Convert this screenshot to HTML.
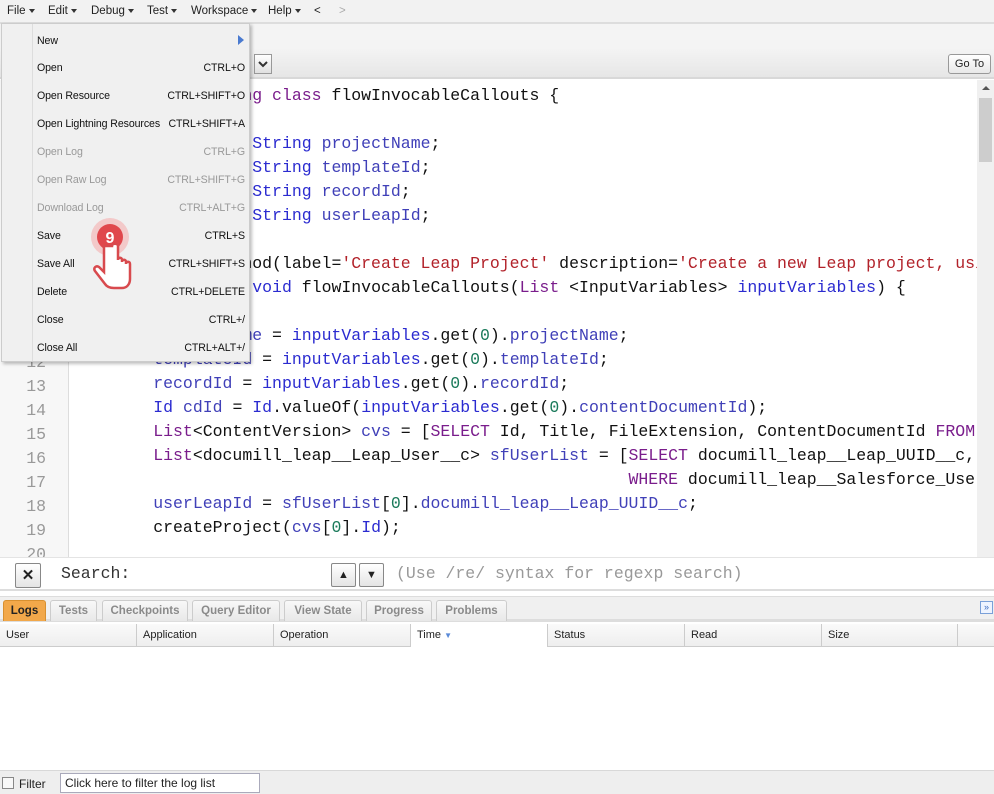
<!DOCTYPE html>
<html><head><meta charset="utf-8"><style>
*{margin:0;padding:0;box-sizing:border-box}
body{width:994px;height:794px;overflow:hidden;background:#fff;font-family:"Liberation Sans",sans-serif;font-size:11px;color:#222;position:relative}
.abs{position:absolute}
#menubar{left:0;top:0;width:994px;height:24px;background:#f2f2f2;border-bottom:2px solid #ddd}
#menubar span{position:absolute;top:5px;font-size:11.5px;color:#222}
.tri{display:inline-block;width:0;height:0;border-left:3px solid transparent;border-right:3px solid transparent;border-top:4px solid #333;vertical-align:middle;margin-left:3px}
#tabrow{left:0;top:24px;width:994px;height:26px;background:#f4f4f4;border-bottom:1px solid #ddd}
#toolbar{left:0;top:48px;width:994px;height:31px;background:linear-gradient(#f4f4f4,#e6e6e6);border-bottom:2px solid #d8d8d8}
#goto{left:948px;top:54px;width:43px;height:20px;border:1px solid #999;border-radius:3px;background:linear-gradient(#fff,#e8e8e8);font-size:11px;text-align:center;line-height:18px}
#editor{left:0;top:80px;width:977px;height:477px;background:#fff;overflow:hidden}
#gutter{left:0;top:0;width:69px;height:477px;background:#f7f7f7;border-right:1px solid #ddd}
.ln{position:absolute;left:0;width:46px;text-align:right;font-family:"Liberation Mono",monospace;font-size:16.5px;color:#999}
.cl{position:absolute;left:74px;white-space:pre;font-family:"Liberation Mono",monospace;font-size:16.5px;color:#111}
.k{color:#7a1d8c}.t{color:#2b2bd0}.v{color:#4040b8}.s{color:#b2222a}.n{color:#1a7a5a}
#scroll{left:977px;top:80px;width:17px;height:477px;background:#f0f0f0}
#search{left:0;top:557px;width:994px;height:34px;background:#fff;border-top:1px solid #e4e4e4;border-bottom:2px solid #ddd}
.btn{position:absolute;border:1px solid #888;border-radius:2px;background:linear-gradient(#fff,#e4e4e4);text-align:center}
#btabs{left:0;top:596px;width:994px;height:26px;background:#f0f0f0;border-top:1px solid #ddd;border-bottom:3px solid #ddd}
.tab{position:absolute;top:3px;height:21px;border:1px solid #ccc;border-bottom:none;border-radius:3px 3px 0 0;background:linear-gradient(#f8f8f8,#e8e8e8);font-weight:bold;color:#8a8a8a;font-size:11.5px;text-align:center;line-height:20px}
#thead{left:0;top:624px;width:994px;height:23px;background:linear-gradient(#fafafa,#eee);border-bottom:1px solid #ccc}
.th{position:absolute;top:0;height:23px;border-right:1px solid #ccc;padding-left:6px;line-height:22px;font-size:11px}
#footer{left:0;top:770px;width:994px;height:24px;background:#eee;border-top:1px solid #d8d8d8}
#menu{left:1px;top:23px;width:249px;height:339px;background:#f0f0f0;border:1px solid #ccc;box-shadow:2px 2px 3px rgba(0,0,0,.25)}
#menu .sep{position:absolute;left:30px;top:0;width:1px;height:337px;background:#ddd}
.mi{position:absolute;left:35px;width:210px;font-size:10.6px;color:#111;letter-spacing:-0.1px}
.mi b{font-weight:normal;position:absolute;right:2px;top:0}
.mi.d{color:#999}
</style></head><body>
<div id="menubar" class="abs">
<span style="left:7px">File<i class="tri"></i></span>
<span style="left:48px">Edit<i class="tri"></i></span>
<span style="left:91px">Debug<i class="tri"></i></span>
<span style="left:147px">Test<i class="tri"></i></span>
<span style="left:191px">Workspace<i class="tri"></i></span>
<span style="left:268px">Help<i class="tri"></i></span>
<span style="left:314px">&lt;</span>
<span style="left:339px;color:#aaa">&gt;</span>
</div>
<div id="tabrow" class="abs"></div>
<div id="toolbar" class="abs"></div>
<div class="abs" style="left:254px;top:54px;width:18px;height:20px;border:1px solid #999;background:linear-gradient(#fff,#e0e0e0)"><svg width="16" height="18"><path d="M4 7l4 4 4-4" stroke="#333" stroke-width="2" fill="none"/></svg></div>
<div id="goto" class="abs">Go To</div>
<div id="editor" class="abs">
<div id="gutter" class="abs"></div>
<div class="ln" style="top:273px">12</div>
<div class="ln" style="top:297px">13</div><div class="ln" style="top:321px">14</div><div class="ln" style="top:345px">15</div><div class="ln" style="top:369px">16</div><div class="ln" style="top:393px">17</div><div class="ln" style="top:417px">18</div><div class="ln" style="top:441px">19</div><div class="ln" style="top:465px">20</div>
<div class="cl" style="top:6px"><span class="k">public with sharing class</span> flowInvocableCallouts {</div>
<div class="cl" style="top:54px">    <span class="k">public static</span> <span class="t">String</span> <span class="v">projectName</span>;</div>
<div class="cl" style="top:78px">    <span class="k">public static</span> <span class="t">String</span> <span class="v">templateId</span>;</div>
<div class="cl" style="top:102px">    <span class="k">public static</span> <span class="t">String</span> <span class="v">recordId</span>;</div>
<div class="cl" style="top:126px">    <span class="k">public static</span> <span class="t">String</span> <span class="v">userLeapId</span>;</div>
<div class="cl" style="top:174px">    @InvocableMethod(label=<span class="s">'Create Leap Project'</span> description=<span class="s">'Create a new Leap project, using</span></div>
<div class="cl" style="top:198px">    <span class="k">public static</span> <span class="t">void</span> flowInvocableCallouts(<span class="k">List</span> &lt;InputVariables&gt; <span class="t">inputVariables</span>) {</div>
<div class="cl" style="top:246px">        <span class="v">projectName</span> = <span class="t">inputVariables</span>.get(<span class="n">0</span>).<span class="v">projectName</span>;</div>
<div class="cl" style="top:270px">        <span class="v">templateId</span> = <span class="t">inputVariables</span>.get(<span class="n">0</span>).<span class="v">templateId</span>;</div>
<div class="cl" style="top:294px">        <span class="v">recordId</span> = <span class="t">inputVariables</span>.get(<span class="n">0</span>).<span class="v">recordId</span>;</div>
<div class="cl" style="top:318px">        <span class="t">Id</span> <span class="v">cdId</span> = <span class="t">Id</span>.valueOf(<span class="t">inputVariables</span>.get(<span class="n">0</span>).<span class="v">contentDocumentId</span>);</div>
<div class="cl" style="top:342px">        <span class="k">List</span>&lt;ContentVersion&gt; <span class="v">cvs</span> = [<span class="k">SELECT</span> Id, Title, FileExtension, ContentDocumentId <span class="k">FROM</span></div>
<div class="cl" style="top:366px">        <span class="k">List</span>&lt;documill_leap__Leap_User__c&gt; <span class="v">sfUserList</span> = [<span class="k">SELECT</span> documill_leap__Leap_UUID__c,</div>
<div class="cl" style="top:390px">                                                        <span class="k">WHERE</span> documill_leap__Salesforce_User</div>
<div class="cl" style="top:414px">        <span class="v">userLeapId</span> = <span class="v">sfUserList</span>[<span class="n">0</span>].<span class="v">documill_leap__Leap_UUID__c</span>;</div>
<div class="cl" style="top:438px">        createProject(<span class="v">cvs</span>[<span class="n">0</span>].<span class="t">Id</span>);</div>
</div>
<div id="scroll" class="abs"><div class="abs" style="left:2px;top:18px;width:13px;height:64px;background:#cdcdcd"></div><svg class="abs" style="left:4px;top:4px" width="10" height="8"><path d="M1 6l4-4 4 4z" fill="#555"/></svg></div>
<div id="search" class="abs">
<div class="btn" style="left:15px;top:5px;width:26px;height:25px;font-size:15px;font-weight:bold;line-height:23px">✕</div>
<div class="abs" style="left:61px;top:6px;font-family:'Liberation Mono',monospace;font-size:16.5px;color:#333">Search:</div>
<div class="btn" style="left:331px;top:5px;width:25px;height:24px;font-size:11px;line-height:22px">▲</div>
<div class="btn" style="left:359px;top:5px;width:25px;height:24px;font-size:11px;line-height:22px">▼</div>
<div class="abs" style="left:396px;top:6px;font-family:'Liberation Mono',monospace;font-size:16.5px;color:#999;white-space:pre">(Use /re/ syntax for regexp search)</div>
</div>
<div id="btabs" class="abs">
<div class="tab" style="left:3px;width:43px;background:#f2a84a;color:#222;border-color:#d89030">Logs</div>
<div class="tab" style="left:50px;width:47px">Tests</div>
<div class="tab" style="left:102px;width:86px">Checkpoints</div>
<div class="tab" style="left:192px;width:88px">Query Editor</div>
<div class="tab" style="left:284px;width:78px">View State</div>
<div class="tab" style="left:366px;width:66px">Progress</div>
<div class="tab" style="left:436px;width:71px">Problems</div>
<div class="abs" style="left:980px;top:4px;width:13px;height:13px;border:1px solid #7aa0d8;background:#eef4ff;font-size:9px;color:#3a6cc0;text-align:center;line-height:10px">»</div>
</div>
<div id="thead" class="abs">
<div class="th" style="left:0;width:137px">User</div>
<div class="th" style="left:137px;width:137px">Application</div>
<div class="th" style="left:274px;width:137px">Operation</div>
<div class="th" style="left:411px;width:137px;background:#fff">Time <span style="color:#5a8ad8;font-size:8px">▼</span></div>
<div class="th" style="left:548px;width:137px">Status</div>
<div class="th" style="left:685px;width:137px">Read</div>
<div class="th" style="left:822px;width:136px">Size</div>
</div>
<div id="footer" class="abs">
<div class="abs" style="left:2px;top:6px;width:12px;height:12px;border:1px solid #888;background:#f8f8f8"></div>
<div class="abs" style="left:19px;top:6px;font-size:12px">Filter</div>
<div class="abs" style="left:60px;top:2px;width:200px;height:20px;border:1px solid #aab;background:#fff;font-size:12px;padding-left:4px;line-height:18px">Click here to filter the log list</div>
</div>
<div id="menu" class="abs">
<div class="sep"></div>
<div class="mi" style="top:11px">New<b><svg width="8" height="10"><path d="M1 0l6 5-6 5z" fill="#4a7ad0"/></svg></b></div>
<div class="mi" style="top:38px">Open<b>CTRL+O</b></div>
<div class="mi" style="top:66px">Open Resource<b>CTRL+SHIFT+O</b></div>
<div class="mi" style="top:94px">Open Lightning Resources<b>CTRL+SHIFT+A</b></div>
<div class="mi d" style="top:122px">Open Log<b>CTRL+G</b></div>
<div class="mi d" style="top:150px">Open Raw Log<b>CTRL+SHIFT+G</b></div>
<div class="mi d" style="top:178px">Download Log<b>CTRL+ALT+G</b></div>
<div class="mi" style="top:206px">Save<b>CTRL+S</b></div>
<div class="mi" style="top:234px">Save All<b>CTRL+SHIFT+S</b></div>
<div class="mi" style="top:262px">Delete<b>CTRL+DELETE</b></div>
<div class="mi" style="top:290px">Close<b>CTRL+/</b></div>
<div class="mi" style="top:318px">Close All<b>CTRL+ALT+/</b></div>
</div>
<svg class="abs" style="left:88px;top:214px" width="52" height="78">
<circle cx="22" cy="23" r="19" fill="#f4b8b8" opacity=".7"/>
<circle cx="22" cy="23" r="13" fill="#e0474c"/>
<text x="22" y="29" text-anchor="middle" font-family="Liberation Sans" font-weight="bold" font-size="16" fill="#fff">9</text>
<path d="M16 32v26l-5-5c-3-2-6 1-4 4l10 13c2 3 5 4 9 4h8c5 0 8-4 8-9V50c0-3-4-3-4 0v-2c0-3-4-3-4 0v-2c0-3-4-3-4 0V32c0-3-6-3-6 0z" fill="#fff" stroke="#d84a4e" stroke-width="2.5"/>
</svg>
</body></html>
